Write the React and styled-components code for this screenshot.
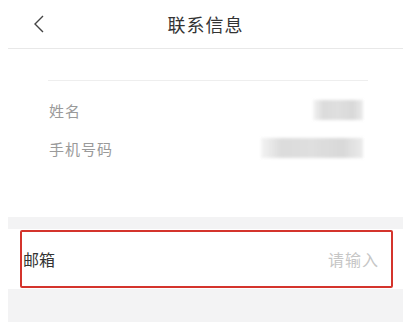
import styled, { createGlobalStyle } from "styled-components"

const Global = createGlobalStyle`
  * { box-sizing: border-box; }
  body {
    margin: 0;
    background: #fff;
    font-family: "Noto Sans CJK SC", "Noto Sans", sans-serif;
  }
`
const Page = styled.div`
  width: 395px;
  height: 322px;
  margin-left: 8px;
  display: flex;
  flex-direction: column;
  background: #fff;
`
const Header = styled.div`
  height: 49px;
  display: flex;
  align-items: center;
  justify-content: center;
  position: relative;
  border-bottom: 1px solid #e8e8e8;
`
const Back = styled.div`
  position: absolute;
  left: 24px;
  top: 14px;
  width: 14px;
  height: 20px;
`
const Title = styled.div`
  font-size: 18px;
  color: #333;
  letter-spacing: 1px;
  margin-top: -1px;
`
const Info = styled.div`
  padding: 31px 35px 0 40px;
  height: 168px;
`
const InfoInner = styled.div`
  border-top: 1px solid #eeeeee;
  padding-top: 10px;
`
const InfoRow = styled.div`
  height: 38px;
  display: flex;
  align-items: center;
  justify-content: space-between;
`
const Label = styled.div`
  font-size: 15px;
  color: #9a9a9a;
  letter-spacing: 1px;
  padding-left: 1px;
`
const Masked = styled.div`
  width: ${p => p.$w}px;
  height: 20px;
  margin-right: 5px;
  background: linear-gradient(90deg, #f2f2f2 0%, #d6d6d6 20%, #dadada 50%, #d2d2d2 80%, #e8e8e8 100%);
  filter: blur(1.5px);
  opacity: 0.85;
`
const Gray = styled.div`
  flex: 1;
  background: #f3f3f4;
  display: flex;
  flex-direction: column;
  padding-top: 12px;
`
const FieldRow = styled.div`
  height: 60px;
  background: #fff;
  display: flex;
  align-items: center;
`
const Highlight = styled.div`
  margin-left: 12px;
  width: 373px;
  height: 58px;
  border: 2px solid #d4342c;
  border-radius: 2px;
  display: flex;
  align-items: center;
  justify-content: space-between;
  padding: 0 12px 0 1px;
`
const FieldLabel = styled.div`
  font-size: 16px;
  color: #333;
`
const Placeholder = styled.div`
  font-size: 16px;
  color: #c6c6c6;
  letter-spacing: 1px;
`

export default function App() {
  return (
    <Page>
      <Global />
      <Header>
        <Back>
          <svg width="14" height="20" viewBox="0 0 14 20">
            <polyline points="11,2 3,10 11,18" fill="none" stroke="#444" strokeWidth="1.4" />
          </svg>
        </Back>
        <Title>联系信息</Title>
      </Header>
      <Info>
        <InfoInner>
          <InfoRow>
            <Label>姓名</Label>
            <Masked $w={50} />
          </InfoRow>
          <InfoRow>
            <Label>手机号码</Label>
            <Masked $w={102} />
          </InfoRow>
        </InfoInner>
      </Info>
      <Gray>
        <FieldRow>
          <Highlight>
            <FieldLabel>邮箱</FieldLabel>
            <Placeholder>请输入</Placeholder>
          </Highlight>
        </FieldRow>
      </Gray>
    </Page>
  )
}
